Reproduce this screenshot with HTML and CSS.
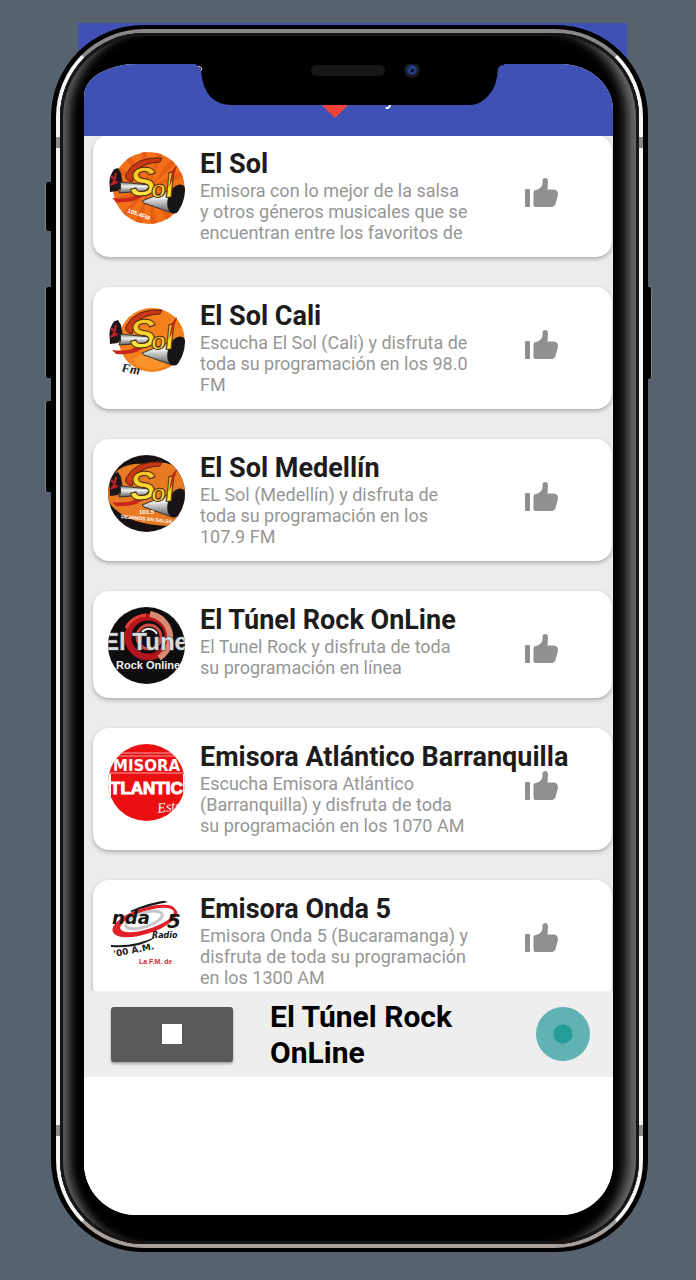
FILE: index.html
```html
<!DOCTYPE html>
<html lang="es">
  <head>
    <meta charset="UTF-8" />
    <meta name="viewport" content="width=device-width, initial-scale=1.0" />
    <title>Emisoras</title>
    <link rel="stylesheet" href="styles.css">
  </head>
  <body>
    <!-- shared shapes -->
    <svg class="shapes" width="0" height="0" aria-hidden="true">
      <symbol id="thumb" viewBox="0 0 34 30">
        <path d="M0 12q0-1 1-1h3q1 0 1 1v16q0 1-1 1H1q-1 0-1-1z" />
        <path d="M8.500 14q0-2 2.500-2c4-1 6.500-4 6.500-7V2q.5-2 2.800-2Q23 0 23 4l-.5 7.500H29q4 .5 4 5L30.500 26q-1 3-4 3h-16q-2 0-2-2z" />
      </symbol>
      <linearGradient id="metal" x1="0" y1="0" x2="0" y2="1">
        <stop offset="0" stop-color="#777" />
        <stop offset=".4" stop-color="#f2f2f2" />
        <stop offset="1" stop-color="#555" />
      </linearGradient>
      <linearGradient id="gold" x1="0" y1="0" x2="0" y2="1">
        <stop offset="0" stop-color="#f9b818" />
        <stop offset="1" stop-color="#fff04a" />
      </linearGradient>
      <symbol id="sol" viewBox="0 0 77 77">
        <path d="M1 20l9-3 3 5 2 12-5 6-8 1z" fill="#1d1719" />
        <path d="M3 25l4 4-3 4 6-2M8 22l-2 9" stroke="#c3202a" stroke-width="2" fill="none" />
        <path d="M12 31l30 3-4 6-27 2q3-5 1-11z" fill="url(#metal)" stroke="#333" stroke-width="1" />
        <path d="M34 50l36-14-6 26-28-10z" fill="url(#metal)" stroke="#333" stroke-width="1" />
        <ellipse cx="69" cy="48" rx="9" ry="15" transform="rotate(18 69 48)" fill="#161416" />
        <path d="M4 47q16 2 24-3l12-4q-10 13-32 11z" fill="#c8261b" />
        <path d="M54 7Q28 5 18 23q-2 6 6 8Q26 12 52 11z" fill="#ca3713" stroke="#5d2211" stroke-width="1" />
        <g class="solText" transform="rotate(-5 40 38)">
          <text x="22" y="44" font-size="40">S</text>
          <text x="43" y="47" font-size="24">o</text>
          <text x="57" y="48" font-size="34">l</text>
        </g>
        <path d="M70 12l-6 18-3 6 3-16z" fill="#b92a1a" />
      </symbol>
    </svg>

    <div class="backdrop"></div>
    <div class="phone">
      <span class="sideButton mute"></span>
      <span class="sideButton volumeUp"></span>
      <span class="sideButton volumeDown"></span>
      <span class="sideButton power"></span>
      <div class="rim">
        <div class="bezel">
          <main class="screen">
            <header class="appBar">
              <svg class="heart" viewBox="0 0 40 36" aria-hidden="true">
                <path d="M20 36L2 18Q-2 8 6 3q9-3 14 6 5-9 14-6 8 5 4 15z" fill="#f44336" />
              </svg>
              <span class="appName">y</span>
            </header>

            <ul class="stationList">
              <li class="station">
                <svg class="logo" viewBox="0 0 77 77" aria-hidden="true">
                  <circle cx="41" cy="37" r="36" fill="#f3701b" />
                  <circle cx="41" cy="37" r="18" fill="none" stroke="#e65e14" stroke-width="36" stroke-dasharray="3 5" />
                  <use href="#sol" />
                  <text x="19" y="61" class="logoTag" transform="rotate(20 19 61)">105.4FM</text>
                </svg>
                <div class="info">
                  <h2>El Sol</h2>
                  <p>Emisora con lo mejor de la salsa y otros géneros musicales que se encuentran entre los favoritos de</p>
                </div>
                <button class="like" aria-label="Me gusta El Sol"><svg><use href="#thumb" /></svg></button>
              </li>
              <li class="station">
                <svg class="logo" viewBox="0 0 77 77" aria-hidden="true">
                  <ellipse cx="44" cy="37" rx="33" ry="32" fill="#f4801c" />
                  <ellipse cx="44" cy="58" rx="18" ry="8" fill="#f8942b" />
                  <use href="#sol" />
                  <text x="13" y="69" class="fmText" transform="rotate(8 13 69)">Fm</text>
                </svg>
                <div class="info">
                  <h2>El Sol Cali</h2>
                  <p>Escucha El Sol (Cali) y disfruta de toda su programación en los 98.0 FM</p>
                </div>
                <button class="like" aria-label="Me gusta El Sol Cali"><svg><use href="#thumb" /></svg></button>
              </li>
              <li class="station">
                <svg class="logo" viewBox="0 0 77 77" aria-hidden="true">
                  <rect width="77" height="77" fill="#171114" />
                  <path d="M0 28Q10 6 38 9q24-6 39 10v46q-8 4-16 6Q16 70 0 46z" fill="#e77a22" />
                  <use href="#sol" />
                  <text x="31" y="59" class="logoTag">101.5</text>
                  <text x="13" y="63" class="logoTag salsaTag" transform="rotate(6 13 63)">DEJAMOS EN SALSA</text>
                </svg>
                <div class="info">
                  <h2>El Sol Medellín</h2>
                  <p>EL Sol (Medellín) y disfruta de toda su programación en los 107.9 FM</p>
                </div>
                <button class="like" aria-label="Me gusta El Sol Medellín"><svg><use href="#thumb" /></svg></button>
              </li>
              <li class="station">
                <svg class="logo" viewBox="0 0 77 77" aria-hidden="true">
                  <rect width="77" height="77" fill="#0d0c0e" />
                  <circle cx="40" cy="30" r="20" fill="none" stroke="#b3151c" stroke-width="7" />
                  <path d="M42 7a24 24 0 0 1 9 44" fill="none" stroke="#d78a6f" stroke-width="6" />
                  <path d="M18 21A24 24 0 0 1 38 8" fill="none" stroke="#e5402f" stroke-width="3" />
                  <circle cx="41" cy="30" r="12" fill="none" stroke="#cf4b3f" stroke-width="3" />
                  <path d="M34 25a9 9 0 0 1 15 2" fill="none" stroke="#eee" stroke-width="2" />
                  <text x="-5" y="43" class="tunelText">El Tune</text>
                  <text x="8" y="62" class="rockText">Rock Online</text>
                </svg>
                <div class="info">
                  <h2>El Túnel Rock OnLine</h2>
                  <p>El Tunel Rock y disfruta de toda su programación en línea</p>
                </div>
                <button class="like" aria-label="Me gusta El Túnel Rock OnLine"><svg><use href="#thumb" /></svg></button>
              </li>
              <li class="station">
                <svg class="logo" viewBox="0 0 77 77" aria-hidden="true">
                  <rect width="77" height="77" fill="#ec0f12" />
                  <path d="M0 9h77M0 12h77M0 29h77" stroke="#f9a3a0" stroke-width="1" />
                  <path d="M0 30h3v28H0zM75 30h2v28h-2z" fill="#fff" />
                  <text x="5" y="27" class="misorText">MISORA</text>
                  <text x="2" y="50" class="atlanticText">TLANTIC</text>
                  <text x="50" y="69" class="estereoText" transform="rotate(-8 50 69)">Este</text>
                </svg>
                <div class="info">
                  <h2>Emisora Atlántico Barranquilla</h2>
                  <p>Escucha Emisora Atlántico (Barranquilla) y disfruta de toda su programación en los 1070 AM</p>
                </div>
                <button class="like" aria-label="Me gusta Emisora Atlántico Barranquilla"><svg><use href="#thumb" /></svg></button>
              </li>
              <li class="station">
                <svg class="logo" viewBox="0 0 77 77" aria-hidden="true">
                  <ellipse cx="37" cy="25" rx="34" ry="13" transform="rotate(-18 37 25)" fill="#e2202a" />
                  <ellipse cx="39" cy="24" rx="28" ry="9" transform="rotate(-18 39 24)" fill="#fff" />
                  <ellipse cx="36" cy="24" rx="19" ry="7" transform="rotate(-18 36 24)" fill="none" stroke="#c5c7cc" stroke-width="3" />
                  <path d="M22 15Q42 6 61 4v2Q42 9 24 16zM3 49q24 2 46-9-16 13-46 11z" fill="#161616" />
                  <text x="4" y="28" class="ondaText">nda</text>
                  <text x="59" y="32" class="fiveText">5</text>
                  <text x="44" y="42" class="radioText">Radio</text>
                  <text x="6" y="61" class="amText" transform="rotate(-11 6 61)">'00 A.M.</text>
                  <text x="31" y="68" class="laFmText">La F.M. de</text>
                </svg>
                <div class="info">
                  <h2>Emisora Onda 5</h2>
                  <p>Emisora Onda 5 (Bucaramanga) y disfruta de toda su programación en los 1300 AM</p>
                </div>
                <button class="like" aria-label="Me gusta Emisora Onda 5"><svg><use href="#thumb" /></svg></button>
              </li>
            </ul>

            <div class="player">
              <button class="stop" aria-label="Detener"><span></span></button>
              <p class="nowPlaying">El Túnel Rock OnLine</p>
              <div class="pulse"></div>
            </div>
            <div class="adSpace"></div>

            <svg class="notch" viewBox="0 0 308 42" aria-hidden="true">
              <path d="M0 0h308v1q-5 0-6 4-1 18-10 27-8 9-18 9H36Q8 41 5 7 5 2 0 1z" fill="#000" />
              <path d="M2 2l4 2-1 3" fill="none" stroke="#ccc" stroke-width="1" />
              <rect x="115" y="1" width="74" height="11" rx="5" fill="#171717" />
              <circle cx="216" cy="6" r="8" fill="#17191d" />
              <circle cx="216" cy="6" r="5" fill="#233a80" />
              <circle cx="216" cy="6" r="2" fill="#070c22" />
              <path d="M213 7l5-4" stroke="#4468bd" stroke-width="1" />
            </svg>
          </main>
        </div>
        <span class="antenna left top"></span>
        <span class="antenna right top"></span>
        <span class="antenna left bottom"></span>
        <span class="antenna right bottom"></span>
      </div>
    </div>
  </body>
</html>
```
FILE: styles.css
```css
* {
  padding: 0;
  margin: 0;
  box-sizing: border-box;
}
body {
  height: 100vh;
  min-height: 700px;
  padding: 25px 48px 28px 51px;
  display: flex;
  position: relative;
  background: #57626f;
  font-family: Roboto, "Liberation Sans", sans-serif;
}
.shapes {
  position: absolute;
}
.backdrop {
  position: absolute;
  top: 23px;
  left: 78px;
  right: 69px;
  height: 90px;
  background: #3f51b5;
}

/* phone */
.phone {
  flex: 1;
  min-width: 0;
  display: flex;
  position: relative;
  padding: 4px 5px;
  background: #000;
  border-radius: 92px;
}
.rim {
  flex: 1;
  min-width: 0;
  display: flex;
  position: relative;
  border: 4px solid;
  border-color: #8b8788 #f4f4f4 #a5a09c #f4f4f4;
  border-radius: 88px;
  background: #000;
}
.bezel {
  flex: 1;
  min-width: 0;
  display: flex;
  padding: 31px 26px 29px 24px;
  border-radius: 84px;
  background: #000;
  box-shadow: inset 0 0 0 3px #161616, inset 16px 0 10px -6px #5c5c5c,
    inset -18px 0 12px -6px #6c6c6c;
}
.screen {
  flex: 1;
  min-width: 0;
  display: flex;
  flex-direction: column;
  position: relative;
  overflow: hidden;
  background: #fff;
  border-radius: 52px 52px 52px 52px / 32px 46px 52px 52px;
}
.sideButton {
  position: absolute;
  width: 7px;
  background: #000;
  border-left: 1px solid #7d8388;
  border-radius: 3px 0 0 3px;
  left: -6px;
}
.mute {
  top: 157px;
  height: 49px;
}
.volumeUp {
  top: 262px;
  height: 91px;
}
.volumeDown {
  top: 376px;
  height: 91px;
}
.power {
  top: 262px;
  height: 92px;
  left: auto;
  right: -4px;
  border-left: none;
  border-right: 1px solid #7d8388;
  border-radius: 0 3px 3px 0;
}
.antenna {
  position: absolute;
  width: 4px;
  height: 11px;
  background: #8c8c8c;
}
.left {
  left: -4px;
}
.right {
  right: -4px;
}
.top {
  top: 104px;
}
.bottom {
  bottom: 108px;
}
.notch {
  position: absolute;
  top: 0;
  left: 50%;
  width: 308px;
  height: 42px;
  margin-left: -153px;
  z-index: 2;
}

/* app */
.appBar {
  flex: none;
  height: 72px;
  display: flex;
  align-items: center;
  justify-content: center;
  gap: 30px;
  padding: 0 0 36px 14px;
  position: relative;
  z-index: 1;
  background: #3f51b5;
  color: #fff;
}
.heart {
  width: 40px;
  height: 36px;
  margin-top: 36px;
}
.appName {
  font-size: 24px;
  line-height: 28px;
  margin-top: 28px;
}
.stationList {
  flex: 1;
  min-height: 0;
  margin-top: -1px;
  padding: 0 1px 0 9px;
  overflow: hidden;
  list-style: none;
  display: flex;
  flex-direction: column;
  gap: 30px;
  background: #ececec;
}
.station {
  flex: none;
  display: flex;
  align-items: flex-start;
  padding: 13px 53px 14px 15px;
  background: #fff;
  border-radius: 16px;
  box-shadow: 0 2px 4px rgba(0, 0, 0, 0.28);
}
.logo {
  flex: none;
  width: 77px;
  height: 77px;
  margin: 3px 15px 0 0;
  border-radius: 50%;
  overflow: hidden;
}
.info {
  flex: 1;
  min-width: 0;
}
.info h2 {
  font-size: 27px;
  line-height: 32px;
  font-weight: 700;
  color: #1c1c1e;
  white-space: nowrap;
}
.info p {
  max-width: 270px;
  font-size: 18px;
  line-height: 21px;
  color: #969696;
}
.like {
  flex: none;
  width: 34px;
  height: 30px;
  margin-top: 30px;
  border: none;
  background: none;
  cursor: pointer;
}
.like svg {
  display: block;
  width: 34px;
  height: 30px;
  fill: #909090;
}
.player {
  flex: none;
  min-height: 84px;
  display: flex;
  align-items: center;
  padding: 6px 23px 6px 27px;
  position: relative;
  background: #eee;
}
.stop {
  flex: none;
  width: 122px;
  height: 55px;
  display: flex;
  align-items: center;
  justify-content: center;
  border: none;
  border-radius: 3px;
  background: #59595a;
  box-shadow: 0 2px 3px rgba(0, 0, 0, 0.3);
  cursor: pointer;
}
.stop span {
  width: 20px;
  height: 20px;
  background: #fff;
}
.nowPlaying {
  flex: 1;
  padding: 2px 40px 0 37px;
  font-size: 30px;
  line-height: 36px;
  font-weight: 700;
  color: #000;
}
.pulse {
  flex: none;
  width: 54px;
  height: 54px;
  border-radius: 50%;
  background: radial-gradient(circle, #269c98 9px, #61b2b2 10px);
}
.adSpace {
  flex: none;
  height: 138px;
  background: #fff;
}

/* station logos */
.solText text {
  font-family: "Liberation Sans", sans-serif;
  font-weight: bold;
  font-style: italic;
  fill: url(#gold);
  stroke: #4b2b0a;
  stroke-width: 1px;
}
.logoTag {
  font: bold 6px "Liberation Sans", sans-serif;
  fill: #fff;
}
.salsaTag {
  font-size: 5px;
}
.fmText {
  font: italic bold 13px "Liberation Serif", serif;
  fill: #222;
}
.tunelText {
  font: bold 24px "Liberation Sans", sans-serif;
  fill: #d9dade;
  stroke: #45474c;
  stroke-width: 1px;
  paint-order: stroke;
}
.rockText {
  font: bold 11px "Liberation Sans", sans-serif;
  fill: #f4f4f4;
}
.misorText {
  font: bold 15px "DejaVu Sans", sans-serif;
  fill: #fff;
}
.atlanticText {
  font: bold 17px "Liberation Sans", sans-serif;
  fill: #fff;
  stroke: #fff;
  stroke-width: 1px;
}
.estereoText {
  font: italic 14px "Liberation Serif", serif;
  fill: #fff;
}
.ondaText {
  font: italic bold 18px "DejaVu Sans", sans-serif;
  fill: #151515;
}
.fiveText {
  font: italic bold 20px "DejaVu Sans", sans-serif;
  fill: #151515;
}
.radioText {
  font: italic bold 8px "DejaVu Sans", sans-serif;
  fill: #151515;
}
.amText {
  font: bold 9px "DejaVu Sans", sans-serif;
  fill: #222;
}
.laFmText {
  font: bold 7px "Liberation Sans", sans-serif;
  fill: #d32a33;
}
```
